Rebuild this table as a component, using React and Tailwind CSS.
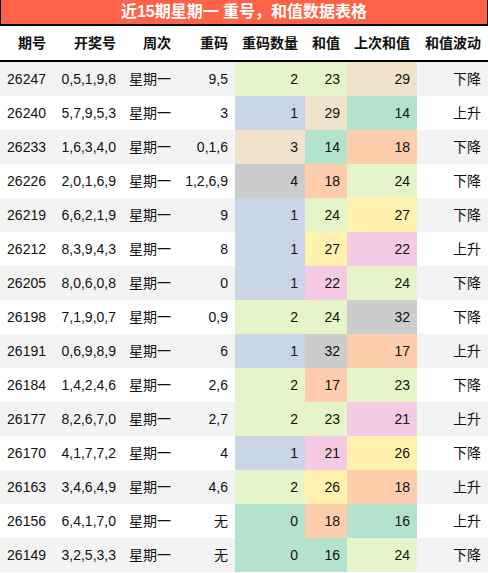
import React from "react";

const COLORS = {
  mint: "bg-[#b3e2cd]",
  peach: "bg-[#fdcdac]",
  blue: "bg-[#cbd5e8]",
  pink: "bg-[#f4cae4]",
  green: "bg-[#e6f5c9]",
  yellow: "bg-[#fff2ae]",
  beige: "bg-[#f1e2cc]",
  grey: "bg-[#cccccc]",
};

const countColor = {
  0: COLORS.mint,
  1: COLORS.blue,
  2: COLORS.green,
  3: COLORS.beige,
  4: COLORS.grey,
};

const sumColor = (v) => {
  if (v <= 16) return COLORS.mint;
  if (v <= 18) return COLORS.peach;
  if (v <= 20) return COLORS.blue;
  if (v <= 22) return COLORS.pink;
  if (v <= 24) return COLORS.green;
  if (v <= 27) return COLORS.yellow;
  if (v <= 30) return COLORS.beige;
  return COLORS.grey;
};

const rows = [
  ["26247", "0,5,1,9,8", "9,5", 2, 23, 29, "下降"],
  ["26240", "5,7,9,5,3", "3", 1, 29, 14, "上升"],
  ["26233", "1,6,3,4,0", "0,1,6", 3, 14, 18, "下降"],
  ["26226", "2,0,1,6,9", "1,2,6,9", 4, 18, 24, "下降"],
  ["26219", "6,6,2,1,9", "9", 1, 24, 27, "下降"],
  ["26212", "8,3,9,4,3", "8", 1, 27, 22, "上升"],
  ["26205", "8,0,6,0,8", "0", 1, 22, 24, "下降"],
  ["26198", "7,1,9,0,7", "0,9", 2, 24, 32, "下降"],
  ["26191", "0,6,9,8,9", "6", 1, 32, 17, "上升"],
  ["26184", "1,4,2,4,6", "2,6", 2, 17, 23, "下降"],
  ["26177", "8,2,6,7,0", "2,7", 2, 23, 21, "上升"],
  ["26170", "4,1,7,7,2", "4", 1, 21, 26, "下降"],
  ["26163", "3,4,6,4,9", "4,6", 2, 26, 18, "上升"],
  ["26156", "6,4,1,7,0", "无", 0, 18, 16, "上升"],
  ["26149", "3,2,5,3,3", "无", 0, 16, 24, "下降"],
];

const headers = ["期号", "开奖号", "周次", "重码", "重码数量", "和值", "上次和值", "和值波动"];

const grid = "grid grid-cols-[53px_70px_55px_57px_70px_42px_70px_71px]";

const App = () => {
  return (
    <div
      className="w-[488px] h-[573px] bg-white text-[#111] text-[14px] overflow-hidden"
      style={{ fontFamily: "'Liberation Sans', 'Noto Sans CJK SC', sans-serif" }}
    >
      {/* Title */}
      <div className="h-[26px] bg-[#ff6347] border-x border-b-2 border-black flex items-center justify-center">
        <span className="text-white font-bold text-[16px] leading-[24px]">近15期星期一 重号，和值数据表格</span>
      </div>

      {/* Header */}
      <div className={`${grid} h-[36px] border-b-2 border-black font-bold`}>
        {headers.map((h) => (
          <div key={h} className="flex items-center justify-end pr-[7px]">
            {h}
          </div>
        ))}
      </div>

      {/* Rows */}
      {rows.map((r, i) => (
        <div key={r[0]} className={`${grid} h-[34px] ${i % 2 === 0 ? "bg-[#f3f3f3]" : "bg-white"}`}>
          <div className="flex items-center justify-end pr-[7px]">{r[0]}</div>
          <div className="flex items-center justify-end pr-[7px]">{r[1]}</div>
          <div className="flex items-center justify-end pr-[7px]">星期一</div>
          <div className="flex items-center justify-end pr-[7px]">{r[2]}</div>
          <div className={`flex items-center justify-end pr-[7px] ${countColor[r[3]]}`}>{r[3]}</div>
          <div className={`flex items-center justify-end pr-[7px] ${sumColor(r[4])}`}>{r[4]}</div>
          <div className={`flex items-center justify-end pr-[7px] ${sumColor(r[5])}`}>{r[5]}</div>
          <div className="flex items-center justify-end pr-[7px]">{r[6]}</div>
        </div>
      ))}
    </div>
  );
};

export default App;
